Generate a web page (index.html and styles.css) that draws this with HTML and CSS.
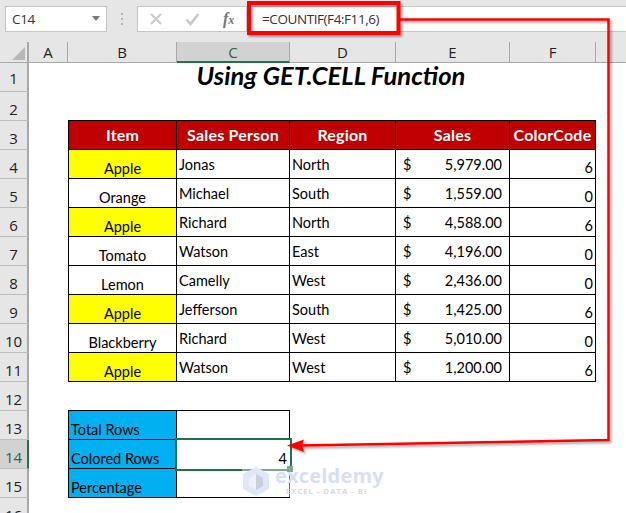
FILE: index.html
```html
<!DOCTYPE html>
<html lang="en">
<head>
<meta charset="utf-8">
<title>Using GET.CELL Function</title>
<link rel="stylesheet" href="styles.css">
</head>
<body>
<div class="app">
  <div class="formula-bar">
    <div class="name-box"><span>C14</span><i class="caret"></i></div>
    <div class="grip"><i></i><i></i><i></i></div>
    <div class="fx-tools">
      <svg class="tool" width="12" height="12" viewBox="0 0 12 12"><path d="M1 1 L11 11 M11 1 L1 11" stroke="#c8c8c8" stroke-width="2" fill="none"/></svg>
      <svg class="tool" width="15" height="13" viewBox="0 0 15 13"><path d="M1.500 6.500 L5.500 11 L13.500 1" stroke="#c8c8c8" stroke-width="2.600" fill="none"/></svg>
      <span class="fx">f<small>x</small></span>
    </div>
    <div class="formula-input">=COUNTIF(F4:F11,6)</div>
  </div>

  <div class="sheet">
    <div class="corner"><i></i></div>
    <div class="col-h">A</div><div class="col-h">B</div><div class="col-h col-sel">C</div><div class="col-h">D</div><div class="col-h">E</div><div class="col-h">F</div><div class="col-rest"></div>

    <div class="row-h row-first">1</div><div></div><div class="title">Using GET.CELL Function</div><div></div>
    <div class="row-h">2</div><div></div><div class="ub"></div><div class="ub"></div><div class="ub"></div><div class="ub"></div><div class="ub"></div><div></div>

    <div class="row-h">3</div><div></div>
    <div class="c hd first">Item</div><div class="c hd">Sales Person</div><div class="c hd">Region</div><div class="c hd">Sales</div><div class="c hd">ColorCode</div><div></div>

    <div class="row-h">4</div><div></div>
    <div class="c item first yellow">Apple</div><div class="c txt">Jonas</div><div class="c txt">North</div><div class="c money"><span>$</span><span>5,979.00</span></div><div class="c num">6</div><div></div>
    <div class="row-h">5</div><div></div>
    <div class="c item first">Orange</div><div class="c txt">Michael</div><div class="c txt">South</div><div class="c money"><span>$</span><span>1,559.00</span></div><div class="c num">0</div><div></div>
    <div class="row-h">6</div><div></div>
    <div class="c item first yellow">Apple</div><div class="c txt">Richard</div><div class="c txt">North</div><div class="c money"><span>$</span><span>4,588.00</span></div><div class="c num">6</div><div></div>
    <div class="row-h">7</div><div></div>
    <div class="c item first">Tomato</div><div class="c txt">Watson</div><div class="c txt">East</div><div class="c money"><span>$</span><span>4,196.00</span></div><div class="c num">0</div><div></div>
    <div class="row-h">8</div><div></div>
    <div class="c item first">Lemon</div><div class="c txt">Camelly</div><div class="c txt">West</div><div class="c money"><span>$</span><span>2,436.00</span></div><div class="c num">0</div><div></div>
    <div class="row-h">9</div><div></div>
    <div class="c item first yellow">Apple</div><div class="c txt">Jefferson</div><div class="c txt">South</div><div class="c money"><span>$</span><span>1,425.00</span></div><div class="c num">6</div><div></div>
    <div class="row-h">10</div><div></div>
    <div class="c item first">Blackberry</div><div class="c txt">Richard</div><div class="c txt">West</div><div class="c money"><span>$</span><span>5,010.00</span></div><div class="c num">0</div><div></div>
    <div class="row-h">11</div><div></div>
    <div class="c item first yellow">Apple</div><div class="c txt">Watson</div><div class="c txt">West</div><div class="c money"><span>$</span><span>1,200.00</span></div><div class="c num">6</div><div></div>

    <div class="row-h">12</div><div></div><div class="ub"></div><div class="ub"></div><div class="span3"></div>

    <div class="row-h">13</div><div></div>
    <div class="c label first">Total Rows</div><div class="c"></div><div class="span3"></div>
    <div class="row-h row-sel">14</div><div></div>
    <div class="c label first">Colored Rows</div><div class="c num selected">4<i class="handle"></i></div><div class="span3"></div>
    <div class="row-h">15</div><div></div>
    <div class="c label first">Percentage</div><div class="c"></div><div class="span3"></div>
    <div class="row-h">16</div>
  </div>

  <div class="watermark">
    <svg width="28" height="31" viewBox="0 0 28 31"><path d="M14 1 L27 8 V23 L14 30 L1 23 V8 Z" fill="#dfe7fa"/><path d="M14 8 L21 12 V20 L14 24 Z" fill="#c9cfdc"/><path d="M14 8 L7 12 V20 L14 24 Z" fill="#eef1f8"/></svg>
    <div class="wm-text"><div class="wm-name">exceldemy</div><div class="wm-sub">EXCEL - DATA - BI</div></div>
  </div>

  <svg class="callout" width="626" height="513" viewBox="0 0 626 513">
    <defs><filter id="sh" x="-5%" y="-5%" width="110%" height="110%"><feDropShadow dx="2" dy="2" stdDeviation="1.200" flood-color="#000" flood-opacity=".35"/></filter></defs>
    <g filter="url(#sh)">
      <rect x="249" y="3" width="149.500" height="30" fill="none" stroke="#ff0000" stroke-width="4"/>
      <path d="M400 19.500 L608.500 19.500 V440 L300 445.500" fill="none" stroke="#ff0000" stroke-width="2.500"/>
      <path d="M287 445.500 L304 439.500 L302 445.500 L304 452 Z" fill="#ff0000"/>
    </g>
  </svg>
</div>
</body>
</html>
```
FILE: styles.css
```css
* { box-sizing: border-box; }
html, body { margin: 0; padding: 0; height: 100%; overflow: hidden; background: #fff; }
.app { position: relative; width: 626px; height: 513px; overflow: hidden; font-family: "Lato", "Liberation Sans", sans-serif; color: #000; }

/* formula bar */
.formula-bar { display: flex; align-items: flex-start; height: 42px; padding-top: 6px; padding-left: 5px; background: #e6e6e6; }
.name-box { position: relative; width: 102px; height: 26px; background: #fff; border: 1px solid #c6c6c6; padding-left: 6px; font: 13.500px/25px "Open Sans", sans-serif; letter-spacing: -.3px; color: #333; }
.caret { position: absolute; right: 6px; top: 9px; border-left: 4px solid transparent; border-right: 4px solid transparent; border-top: 5px solid #7a7a7a; }
.grip { display: flex; flex-direction: column; gap: 3px; width: 30px; padding: 7px 0 0 14px; }
.grip i { width: 2px; height: 2px; background: #b4b4b4; }
.fx-tools { display: flex; align-items: center; width: 110px; height: 26px; background: #fff; border: 1px solid #c6c6c6; padding-left: 12px; }
.tool { margin-right: 23px; }
.tool + .tool { margin-right: 23px; }
.fx { font: italic 700 16px "Liberation Serif", serif; color: #777; }
.fx small { font-size: 12px; }
.formula-input { flex: 1; height: 26px; margin-left: -1px; background: #fff; border: 1px solid #c6c6c6; border-right: 0; padding-left: 15px; font: 13.500px/25px "Open Sans", sans-serif; letter-spacing: -.42px; color: #333; }

/* grid */
.sheet { display: grid; grid-template-columns: 29px 39px 109px 113px 106px 114px 86px 30px; grid-template-rows: 21px repeat(15, 29px) 29px; background: #fff; }
.corner { position: relative; background: #e6e6e6; border-right: 2px solid #a8a8a8; border-bottom: 1px solid #a8a8a8; }
.corner i { position: absolute; right: 2px; bottom: 2px; border-left: 13px solid transparent; border-bottom: 13px solid #b8b8b8; }
.col-h { display: flex; align-items: center; justify-content: center; background: #e6e6e6; border-right: 1px solid #a8a8a8; border-bottom: 1px solid #a8a8a8; font: 15px "Open Sans", sans-serif; color: #222; }
.col-sel { background: #d2d2d2; border-bottom: 2px solid #217346; color: #1d6b41; }
.col-rest { background: #e6e6e6; border-bottom: 1px solid #a8a8a8; }
.row-h { grid-column: 1; display: flex; align-items: center; justify-content: center; padding-top: 5px; background: #e6e6e6; border-right: 2px solid #a8a8a8; border-bottom: 1px solid #bdbdbd; font: 15px "Open Sans", sans-serif; color: #222; }
.row-first { padding-top: 1px; }
.row-sel { background: #d2d2d2; border-right-color: #217346; color: #1d6b41; }
.title { grid-column: 3 / 8; display: flex; align-items: center; justify-content: center; padding-bottom: 4px; padding-right: 2px; font-size: 25.600px; line-height: 25px; font-weight: 700; font-style: italic; white-space: nowrap; }
.span3 { grid-column: 5 / 9; }
.ub { border-bottom: 1px solid #000; }

.c { display: flex; border-right: 1px solid #000; border-bottom: 1px solid #000; font-size: 14.500px; white-space: nowrap; }
.first { border-left: 1px solid #000; }
.hd { align-items: center; justify-content: center; padding-bottom: 2px; background: #c00000; color: #fff; font-weight: 700; font-size: 16px; letter-spacing: .2px; }
.item { align-items: flex-end; justify-content: center; padding-bottom: 1px; }
.yellow { background: #ffff00; }
.txt { align-items: center; padding: 0 0 0 2px; }
.money { align-items: center; justify-content: space-between; padding: 0 7px 0 7px; }
.num { position: relative; align-items: flex-end; justify-content: flex-end; padding: 0 2px 2px 0; }
.label { align-items: flex-end; padding: 0 0 1px 2px; background: #00b0f0; }
.selected { border: 0; box-shadow: 0 0 0 2px #217346; padding: 0 3px 2px 0; z-index: 1; }
.handle { position: absolute; right: -3px; bottom: -3px; width: 6px; height: 6px; background: #217346; }

/* overlays */
.watermark { position: absolute; left: 242px; top: 466px; display: flex; gap: 5px; padding-right: 6px; background: rgba(255,255,255,.4); z-index: 2; }
.wm-text { display: flex; flex-direction: column; }
.wm-name { font: 700 20px/20px "Open Sans", sans-serif; color: #d5dff6; letter-spacing: .2px; }
.wm-sub { font: 700 7.500px/10px "Open Sans", sans-serif; letter-spacing: 1.100px; color: #d9d9d9; padding-left: 11px; }
.callout { position: absolute; left: 0; top: 0; z-index: 3; pointer-events: none; }
```
